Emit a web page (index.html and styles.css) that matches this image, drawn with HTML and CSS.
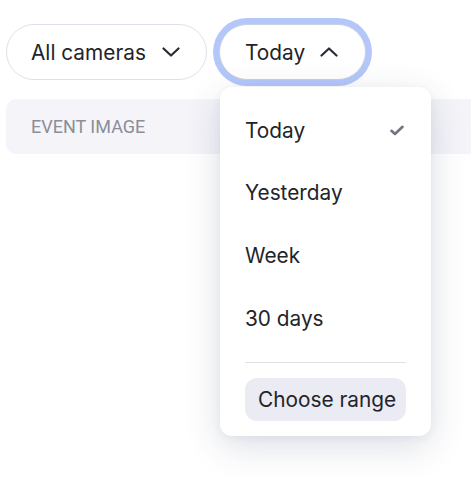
FILE: index.html
```html
<!DOCTYPE html>
<html>
<head>
<meta charset="utf-8">
<link rel="stylesheet" href="styles.css">
</head>
<body>
<div class="page">
  <div class="filters">
    <button class="btn btn-cameras">
      <span>All cameras</span>
      <svg class="chev" width="18" height="10" viewBox="0 0 18 10"><path d="M1.5 1.5 L9 8.5 L16.5 1.5" fill="none" stroke="#2a2c33" stroke-width="2.2" stroke-linecap="round" stroke-linejoin="round"/></svg>
    </button>
    <div class="dd">
      <button class="btn btn-today">
        <span>Today</span>
        <svg class="chev" width="18" height="10" viewBox="0 0 18 10"><path d="M1.5 8.5 L9 1.5 L16.5 8.5" fill="none" stroke="#2a2c33" stroke-width="2.2" stroke-linecap="round" stroke-linejoin="round"/></svg>
      </button>
      <div class="menu">
        <div class="item"><span>Today</span>
          <svg width="14" height="11" viewBox="0 0 14 11"><path d="M1.5 5.8 L5 9 L12.5 1.8" fill="none" stroke="#6f7480" stroke-width="2.6" stroke-linecap="round" stroke-linejoin="round"/></svg>
        </div>
        <div class="item"><span>Yesterday</span></div>
        <div class="item"><span>Week</span></div>
        <div class="item"><span>30 days</span></div>
        <div class="divider"></div>
        <button class="range">Choose range</button>
      </div>
    </div>
  </div>
  <div class="event-bar">EVENT IMAGE</div>
</div>
</body>
</html>
```
FILE: styles.css
```css
* { box-sizing: border-box; }
html, body { margin: 0; padding: 0; background: #ffffff; overflow: hidden; }
body { font-family: Inter, "Noto Sans", sans-serif; color: #222429; width: 471px; height: 478px; }
.page { padding: 24px 0 0 6px; }
.filters { display: flex; gap: 12px; }
.btn {
  display: flex; align-items: center;
  height: 56px; border: 1px solid #dde0e8; border-radius: 28px;
  background: #fff; font-family: Inter, sans-serif; font-size: 20.8px; color: #222429;
  cursor: pointer; white-space: nowrap;
}
.btn-cameras { width: 201px; padding: 0 0 0 24px; gap: 16px; }
.btn-today { width: 147px; padding: 0 0 0 25px; gap: 15px; border-color: #c9cfdc;
  box-shadow: 0 0 0 6px #b4c7fb; }
.chev { display: block; }
.dd { position: relative; }
.menu {
  position: absolute; left: 1px; top: 63px; width: 211px;
  background: #fff; border-radius: 12px;
  box-shadow: 0 10px 36px rgba(40, 50, 90, 0.16), 0 2px 8px rgba(40, 50, 90, 0.05);
  padding: 12px 25px 15px 25px; z-index: 10;
}
.item { height: 62.6px; display: flex; align-items: center; justify-content: space-between;
  font-size: 20.8px; color: #222429; padding-right: 2px; white-space: nowrap; }
.divider { height: 1px; background: #e0e1e6; margin: 13px 0 15px; }
.range {
  display: block; width: 100%; height: 43px; border: none; border-radius: 12px;
  background: #ebebf3; font-family: Inter, sans-serif; font-size: 20.8px; color: #222429;
  text-align: left; padding: 0 0 0 13px; white-space: nowrap;
}
.event-bar {
  margin-top: 19px; margin-right: -20px; height: 55px; border-radius: 10px;
  background: #f4f4f9; padding-left: 25px; display: flex; align-items: center;
  font-family: Roboto, sans-serif; font-size: 18px; color: #8a8e9a;
}
```
